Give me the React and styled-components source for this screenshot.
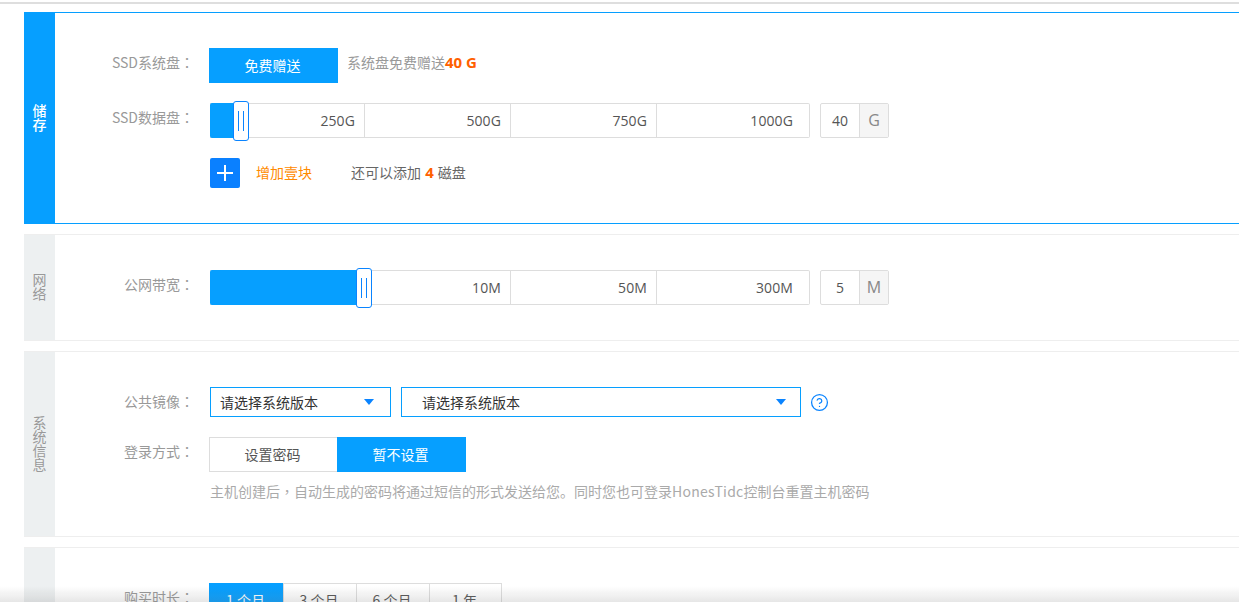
import React from 'react'
import styled, { createGlobalStyle } from 'styled-components'
import { CircleHelp } from 'lucide-react'

const colors = {
    primary: '#069fff',
    handle: '#0a84ff',
    line: '#dddddd',
    soft: '#eeeeee',
    tab: '#edf0f1',
    label: '#999999',
    text: '#555555',
}

const GlobalStyle = createGlobalStyle`
    html, body {
        margin: 0;
        height: 100%;
        overflow: hidden;
        background: #fff;
    }
    body {
        font-family: "Noto Sans CJK SC", "Liberation Sans", sans-serif;
        font-size: 14px;
        color: ${colors.text};
    }
`

const Page = styled.main`
    height: 602px;
    overflow: hidden;
    padding-top: 2px;
    box-sizing: border-box;
`

const TopRule = styled.div`
    height: 2px;
    background: #dedede;
    margin-bottom: 8px;
`

const Section = styled.section`
    display: flex;
    margin: 0 0 10px 24px;
    border-top: 1px solid ${p => (p.$active ? colors.primary : colors.soft)};
    border-bottom: 1px solid ${p => (p.$active ? colors.primary : colors.soft)};
`

const SideTab = styled.div`
    flex: 0 0 31px;
    display: flex;
    align-items: center;
    justify-content: center;
    background: ${p => (p.$active ? colors.primary : colors.tab)};
    color: ${p => (p.$active ? '#fff' : colors.label)};
    span {
        width: 14px;
        padding-bottom: 3px;
        line-height: 14px;
        font-weight: ${p => (p.$active ? 500 : 400)};
        text-align: center;
    }
`

const Body = styled.div`
    flex: 1;
    display: flex;
    flex-direction: column;
    gap: 20px;
    padding: 35px 0;
`

const Row = styled.div`
    display: flex;
    align-items: flex-start;
`

const Label = styled.div`
    flex: 0 0 139px;
    padding-right: 15px;
    text-align: right;
    line-height: 28px;
    color: ${colors.label};
`

// centred full-width punctuation, as in the original font
const Punct = styled.span`
    font-family: "Noto Sans CJK TC", "Noto Sans CJK SC", sans-serif;
`

const Controls = styled.div`
    display: flex;
    align-items: center;
`

const Choice = styled.button`
    width: ${p => p.$width || 129}px;
    height: 35px;
    margin: 0 -1px 0 0;
    padding: 0 2px 0 0;
    font: inherit;
    line-height: 33px;
    border: 1px solid ${p => (p.$on ? colors.primary : colors.line)};
    background: ${p => (p.$on ? colors.primary : '#fff')};
    color: ${p => (p.$on ? '#fff' : colors.text)};
`

const Note = styled.span`
    margin-left: 10px;
    color: ${colors.label};
    line-height: 28px;
    align-self: flex-start;
`

const Strong = styled.b`
    margin: 0 ${p => p.$space || 0}px;
    color: #ff6000;
    font-size: 15px;
    font-weight: 700;
    font-family: "Open Sans", "Noto Sans CJK SC", sans-serif;
`

const Slider = styled.div`
    position: relative;
    display: flex;
    width: 600px;
    height: 35px;
    margin-left: 1px;
    box-sizing: border-box;
    border-top: 1px solid ${colors.line};
    border-bottom: 1px solid ${colors.line};
    border-right: 1px solid ${colors.line};
    border-radius: 0 2px 2px 0;
`

const Segment = styled.div`
    width: ${p => p.$width}px;
    box-sizing: border-box;
    padding-right: ${p => (p.$last ? 16 : 9)}px;
    border-right: ${p => (p.$last ? 0 : `1px solid ${colors.line}`)};
    text-align: right;
    line-height: 33px;
    font-family: "Open Sans", "Noto Sans CJK SC", sans-serif;
    font-size: 14px;
    letter-spacing: 0.1px;
`

const Fill = styled.div`
    position: absolute;
    left: 0;
    top: -1px;
    bottom: -1px;
    background: ${colors.primary};
    border-radius: 2px 0 0 2px;
`

const Handle = styled.div`
    position: absolute;
    top: -3px;
    width: 16px;
    height: 40px;
    box-sizing: border-box;
    border: 1px solid ${colors.handle};
    border-radius: 3px;
    background: #fff;
    display: flex;
    align-items: center;
    justify-content: center;
    gap: 4px;
    i {
        width: 1px;
        height: 20px;
        background: ${colors.handle};
    }
`

const UnitBox = styled.div`
    display: flex;
    width: 69px;
    height: 35px;
    margin-left: 10px;
    box-sizing: border-box;
    border: 1px solid ${colors.line};
    border-radius: 2px;
    line-height: 33px;
    text-align: center;
    font-family: "Open Sans", "Noto Sans CJK SC", sans-serif;
    span {
        flex: 1;
    }
    em {
        flex: 0 0 28px;
        font-style: normal;
        font-size: 16px;
        border-left: 1px solid ${colors.line};
        background: #f5f5f5;
        color: #888;
    }
`

const AddRow = styled.div`
    display: flex;
    align-items: center;
    height: 30px;
    margin-left: 1px;
`

const AddButton = styled.button`
    width: 30px;
    height: 30px;
    padding: 0;
    border: 0;
    border-radius: 2px;
    background: #0a80ff;
    display: flex;
    align-items: center;
    justify-content: center;
`

const AddText = styled.span`
    margin: -2px 0 0 16px;
    color: #ff8a00;
`

const AddHint = styled.span`
    margin: -2px 0 0 39px;
    color: #666;
`

const Select = styled.div`
    display: flex;
    align-items: center;
    justify-content: space-between;
    width: ${p => p.$width}px;
    height: 30px;
    margin-left: ${p => p.$offset}px;
    padding: 0 ${p => p.$padEnd}px 0 ${p => p.$pad}px;
    box-sizing: border-box;
    border: 1px solid ${colors.primary};
    color: #333;
    &::after {
        content: '';
        border-left: 5px solid transparent;
        border-right: 5px solid transparent;
        border-top: 6px solid ${colors.handle};
    }
`

const Help = styled(CircleHelp)`
    margin-left: 9px;
    color: ${colors.handle};
`

const Stack = styled.div`
    display: flex;
    flex-direction: column;
    gap: 9px;
`

const Hint = styled.p`
    margin: 0 0 0 1px;
    line-height: 20px;
    color: #aaaaaa;
    white-space: nowrap;
`

const Brand = styled.span`
    letter-spacing: 0.25px;
`

const Period = styled(Choice)`
    width: ${p => p.$width || 74}px;
`

const BottomShade = styled.div`
    position: fixed;
    left: 0;
    right: 0;
    bottom: 0;
    height: 16px;
    background: linear-gradient(to bottom, rgba(120, 120, 120, 0), rgba(120, 120, 120, 0.18));
    pointer-events: none;
`

const PlusIcon = () => (
    <svg width="16" height="16" viewBox="0 0 16 16">
        <path d="M8 0v16M0 8h16" stroke="#fff" strokeWidth="2" fill="none" />
    </svg>
)

function RangeSlider({ fill, segments }) {
    return (
        <Slider>
            <Fill style={{ width: fill }} />
            {segments.map((s, i) => (
                <Segment key={s.text} $width={s.width} $last={i === segments.length - 1}>{s.text}</Segment>
            ))}
            <Handle style={{ left: fill - 1 }}><i /><i /></Handle>
        </Slider>
    )
}

const storage = [
    { text: '250G', width: 155 },
    { text: '500G', width: 146 },
    { text: '750G', width: 146 },
    { text: '1000G', width: 152 },
]

const bandwidth = [
    { text: '10M', width: 301 },
    { text: '50M', width: 146 },
    { text: '300M', width: 152 },
]

export default function App() {
    return (
        <Page>
            <GlobalStyle />
            <TopRule />

            <Section $active>
                <SideTab $active><span>储存</span></SideTab>
                <Body>
                    <Row>
                        <Label>SSD系统盘<Punct>：</Punct></Label>
                        <Controls>
                            <Choice $on>免费赠送</Choice>
                            <Note>系统盘免费赠送<Strong>40 G</Strong></Note>
                        </Controls>
                    </Row>
                    <Row>
                        <Label>SSD数据盘<Punct>：</Punct></Label>
                        <Controls>
                            <RangeSlider fill={24} segments={storage} />
                            <UnitBox><span>40</span><em>G</em></UnitBox>
                        </Controls>
                    </Row>
                    <Row>
                        <Label />
                        <AddRow>
                            <AddButton aria-label="增加"><PlusIcon /></AddButton>
                            <AddText>增加壹块</AddText>
                            <AddHint>还可以添加 <Strong $space={1}>4</Strong> 磁盘</AddHint>
                        </AddRow>
                    </Row>
                </Body>
            </Section>

            <Section>
                <SideTab><span>网络</span></SideTab>
                <Body>
                    <Row>
                        <Label>公网带宽<Punct>：</Punct></Label>
                        <Controls>
                            <RangeSlider fill={147} segments={bandwidth} />
                            <UnitBox><span>5</span><em>M</em></UnitBox>
                        </Controls>
                    </Row>
                </Body>
            </Section>

            <Section>
                <SideTab><span>系统信息</span></SideTab>
                <Body>
                    <Row>
                        <Label>公共镜像<Punct>：</Punct></Label>
                        <Controls>
                            <Select $width={181} $pad={9} $padEnd={16} $offset={1}>请选择系统版本</Select>
                            <Select $width={400} $pad={20} $padEnd={14} $offset={10}>请选择系统版本</Select>
                            <Help size={19} strokeWidth={1.6} />
                        </Controls>
                    </Row>
                    <Row>
                        <Label>登录方式<Punct>：</Punct></Label>
                        <Stack>
                            <Controls>
                                <Choice>设置密码</Choice>
                                <Choice $on>暂不设置</Choice>
                            </Controls>
                            <Hint>主机创建后<Punct>，</Punct>自动生成的密码将通过短信的形式发送给您。同时您也可登录<Brand>HonesTidc</Brand>控制台重置主机密码</Hint>
                        </Stack>
                    </Row>
                </Body>
            </Section>

            <Section>
                <SideTab />
                <Body>
                    <Row>
                        <Label>购买时长<Punct>：</Punct></Label>
                        <Controls>
                            <Period $on $width={75}>1 个月</Period>
                            <Period>3 个月</Period>
                            <Period>6 个月</Period>
                            <Period $width={73}>1 年</Period>
                        </Controls>
                    </Row>
                </Body>
            </Section>

            <BottomShade />
        </Page>
    )
}
